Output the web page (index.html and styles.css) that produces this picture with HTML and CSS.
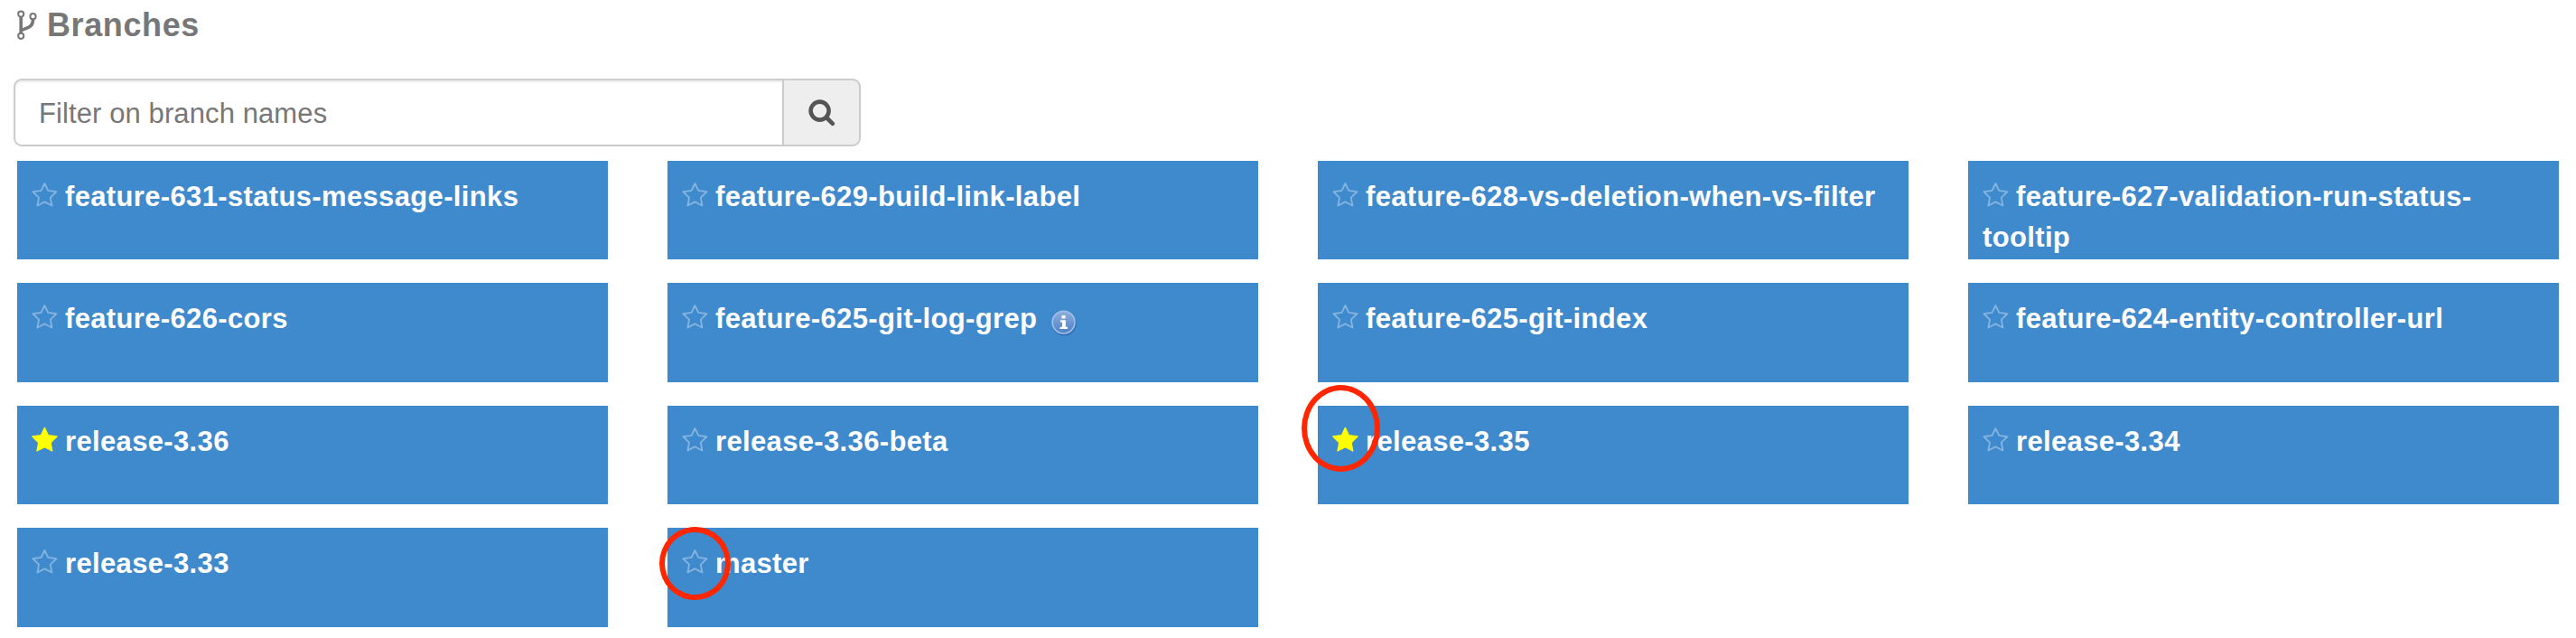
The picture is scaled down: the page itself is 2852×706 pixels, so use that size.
FILE: index.html
```html
<!DOCTYPE html>
<html lang="en">
<head>
<meta charset="utf-8">
<title>Branches</title>
<link rel="stylesheet" href="styles.css">
</head>
<body>
<svg class="defs" width="0" height="0">
  <defs>
    <symbol id="star-o" viewBox="0 0 30 29"><path d="M14.4 2 18.2 9.9 27.4 11.2 20.8 17.6 22.4 26.5 14.4 22.3 6.4 26.5 8 17.6 1.4 11.2 10.6 9.9Z" fill="none" stroke="currentColor" stroke-width="1.9" stroke-linejoin="round"/></symbol>
    <symbol id="star" viewBox="0 0 30 29"><path d="M14.4 1.4 18.4 9.7 28 11 21.1 17.7 22.8 27 14.4 22.6 6 27 7.7 17.7 .8 11 10.4 9.7Z" fill="currentColor" stroke="currentColor" stroke-width="1.3" stroke-linejoin="round"/></symbol>
  </defs>
</svg>
<main class="page">
  <h2 class="title">
    <svg class="fork" viewBox="0 0 22 33" fill="none" stroke="currentColor"><circle cx="4.2" cy="4.6" r="3.1" stroke-width="2"/><circle cx="4.2" cy="28.8" r="3.1" stroke-width="2"/><circle cx="17.5" cy="7.2" r="3.1" stroke-width="2"/><path d="M4.2 7.8V25.6M17.5 10.4C17.5 19 12 19.5 4.2 22.5" stroke-width="3.6"/></svg>
    <span class="title-text">Branches</span>
  </h2>
  <form class="filter">
    <input class="field" type="text" placeholder="Filter on branch names">
    <button class="search" type="button" aria-label="Search"><svg class="glass" viewBox="0 0 30 30" fill="none" stroke="currentColor"><circle cx="12.6" cy="12.6" r="10" stroke-width="4.6"/><path d="M20 20 26.8 26.8" stroke-width="4.6" stroke-linecap="round"/></svg></button>
  </form>
  <section class="grid">
    <div class="tile"><svg class="star"><use href="#star-o"/></svg><a>feature-631-status-message-links</a></div>
    <div class="tile"><svg class="star"><use href="#star-o"/></svg><a>feature-629-build-link-label</a></div>
    <div class="tile"><svg class="star"><use href="#star-o"/></svg><a>feature-628-vs-deletion-when-vs-filter</a></div>
    <div class="tile"><svg class="star"><use href="#star-o"/></svg><a>feature-627-validation-run-status-<br>tooltip</a></div>
    <div class="tile"><svg class="star"><use href="#star-o"/></svg><a>feature-626-cors</a></div>
    <div class="tile"><svg class="star"><use href="#star-o"/></svg><a>feature-625-git-log-grep</a><svg class="info" viewBox="0 0 30 30"><defs><linearGradient id="ball" x1="0" y1="0" x2="0" y2="1"><stop offset="0" stop-color="#8fb0de"/><stop offset="1" stop-color="#4f7fc4"/></linearGradient></defs><circle cx="15.4" cy="16.2" r="13.4" fill="#2f65b0" opacity=".75"/><circle cx="14.6" cy="14.6" r="12.4" fill="url(#ball)" stroke="#a3bfe6" stroke-width="1.6"/><path d="M12.5 7h4v3.4h-4zM11 12.2h5.8v7.6H19V22h-8.4v-2.2h2.4v-5.4h-2z" fill="#fff"/></svg></div>
    <div class="tile"><svg class="star"><use href="#star-o"/></svg><a>feature-625-git-index</a></div>
    <div class="tile"><svg class="star"><use href="#star-o"/></svg><a>feature-624-entity-controller-url</a></div>
    <div class="tile"><svg class="star on"><use href="#star"/></svg><a>release-3.36</a></div>
    <div class="tile"><svg class="star"><use href="#star-o"/></svg><a>release-3.36-beta</a></div>
    <div class="tile"><svg class="star on"><use href="#star"/></svg><a>release-3.35</a><span class="ring ring-release"></span></div>
    <div class="tile"><svg class="star"><use href="#star-o"/></svg><a>release-3.34</a></div>
    <div class="tile"><svg class="star"><use href="#star-o"/></svg><a>release-3.33</a></div>
    <div class="tile"><svg class="star"><use href="#star-o"/></svg><a>master</a><span class="ring ring-master"></span></div>
  </section>
</main>
</body>
</html>
```
FILE: styles.css
```css
* { box-sizing: border-box; }
body {
  margin: 0;
  background: #fff;
  font-family: "Liberation Sans", Arial, sans-serif;
  overflow: hidden;
}
.defs { display: block; height: 0; }
.page { height: 706px; }
.title {
  display: flex;
  align-items: center;
  gap: 11px;
  height: 54px;
  margin: 0 0 33px;
  padding-left: 19px;
  font-size: 36px;
  line-height: 54px;
  letter-spacing: 0.6px;
  color: #777;
}
.title-text { padding-top: 2px; }
.fork { width: 22px; height: 33px; }
.filter {
  display: flex;
  width: 938px;
  height: 75px;
  margin: 0 0 16px 15px;
}
.field {
  flex: 1;
  min-width: 0;
  padding: 2px 26px 0;
  border: 2px solid #ccc;
  border-right: 0;
  border-radius: 9px 0 0 9px;
  box-shadow: inset 0 2px 2px rgba(0, 0, 0, 0.075);
  font: 31px/69px "Liberation Sans", Arial, sans-serif;
  letter-spacing: 0.1px;
}
.field::placeholder { color: #777; opacity: 1; }
.search {
  display: flex;
  align-items: center;
  justify-content: center;
  width: 87px;
  padding: 0;
  border: 2px solid #ccc;
  border-radius: 0 9px 9px 0;
  background: #eee;
  color: #555;
}
.glass { width: 30px; height: 30px; }
.grid {
  display: grid;
  grid-template-columns: repeat(4, 654px);
  grid-template-rows: 109px 110px 109px 110px;
  gap: 26px 66px;
  padding-left: 19px;
}
.tile {
  position: relative;
  padding: 17px 16px 0;
  background: #3f8acd;
  color: #fff;
  font-size: 31px;
  font-weight: bold;
  line-height: 45px;
  letter-spacing: 0.35px;
  white-space: nowrap;
}
.star {
  width: 30px;
  height: 29px;
  margin-right: 7px;
  vertical-align: -2px;
  color: #83b3df;
}
.star.on { color: #ff0; }
.info {
  width: 30px;
  height: 30px;
  margin-left: 15px;
  vertical-align: -9px;
}
.ring {
  position: absolute;
  border: 6px solid #ff2600;
  border-radius: 50%;
}
.ring-release { left: -18px; top: -23px; width: 87px; height: 96px; }
.ring-master { left: -9px; top: -1px; width: 79px; height: 81px; }
```
